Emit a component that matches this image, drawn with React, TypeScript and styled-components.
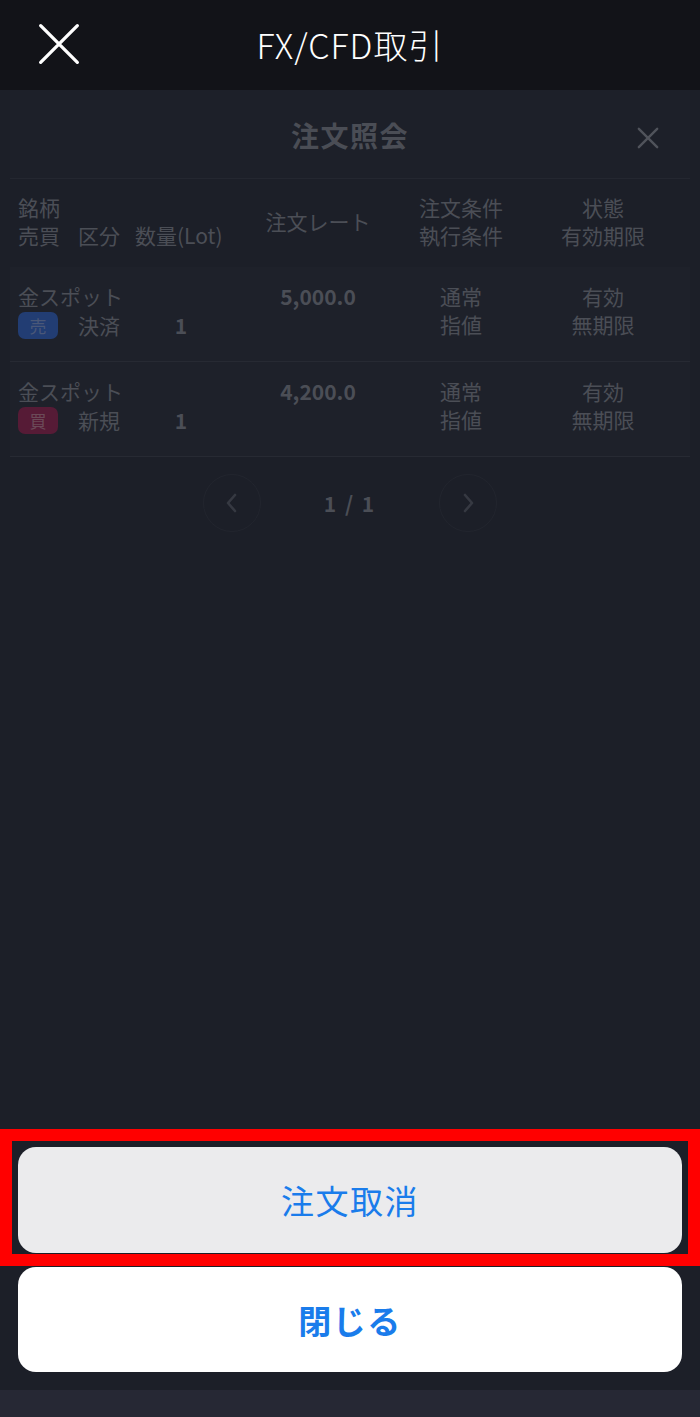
import styled, { createGlobalStyle } from "styled-components";

const GlobalStyle = createGlobalStyle`
    html, body {
        margin: 0;
        padding: 0;
        background: #1c1f28;
    }
    body {
        font-family: "Noto Sans CJK JP", "Noto Sans", "Liberation Sans", sans-serif;
    }
    * {
        box-sizing: border-box;
    }
`;

const Screen = styled.div`
    display: flex;
    flex-direction: column;
    width: 700px;
    height: 1417px;
    background: #1c1f28;
    overflow: hidden;
`;

const Header = styled.header`
    display: grid;
    grid-template-columns: 90px 1fr 90px;
    align-items: center;
    height: 90px;
    background: #121318;
    flex-shrink: 0;
`;

const IconButton = styled.button`
    display: flex;
    align-items: center;
    justify-content: center;
    padding: 0;
    border: 0;
    background: none;
    cursor: pointer;
`;

const HeaderClose = styled(IconButton)`
    width: 90px;
    height: 90px;
    margin-left: 14px;
    margin-top: -2px;
`;

const HeaderTitle = styled.h1`
    margin: 0;
    text-align: center;
    color: #ffffff;
    font-size: 34px;
    font-weight: 300;
    letter-spacing: 1px;
    margin-top: -2px;
`;

const Main = styled.main`
    flex: 1;
    display: flex;
    flex-direction: column;
    padding: 0 10px;
`;

const ModalHead = styled.div`
    position: relative;
    display: flex;
    align-items: center;
    justify-content: center;
    height: 89px;
    border-bottom: 1px solid #242730;
    background: #1d2029;
`;

const ModalTitle = styled.h2`
    margin: 0;
    color: #4a4d55;
    font-size: 28px;
    font-weight: 700;
    letter-spacing: 1.5px;
    margin-top: 2px;
`;

const ModalClose = styled(IconButton)`
    position: absolute;
    right: 25px;
    top: 31px;
    width: 34px;
    height: 34px;
`;

const TableRow = styled.div<{ $head?: boolean }>`
    display: grid;
    grid-template-columns: 222px 156px 130px 154px;
    padding: ${(p) => (p.$head ? "14px 8px 18px" : "15px 8px 22px")};
    background: ${(p) => (p.$head ? "transparent" : "#1e212a")};
    border-bottom: ${(p) => (p.$head ? "0" : "1px solid #272a33")};
    color: #4b4e56;
    font-size: 21px;
    line-height: 28px;
`;

const Cell = styled.div<{ $center?: boolean; $middle?: boolean; $bold?: boolean }>`
    display: flex;
    flex-direction: column;
    align-items: ${(p) => (p.$center ? "center" : "flex-start")};
    justify-content: ${(p) => (p.$middle ? "center" : "flex-start")};
    font-weight: ${(p) => (p.$bold ? 700 : 400)};
`;

const SubLine = styled.div`
    display: grid;
    grid-template-columns: 60px 57px 92px;
    align-items: center;
    white-space: nowrap;
`;

const Qty = styled.span<{ $head?: boolean }>`
    text-align: ${(p) => (p.$head ? "left" : "center")};
    font-weight: ${(p) => (p.$head ? 400 : 700)};
`;

const Badge = styled.span<{ $side: "sell" | "buy" }>`
    display: inline-flex;
    align-items: center;
    justify-content: center;
    width: 40px;
    height: 27px;
    margin-top: 2px;
    border-radius: 7px;
    font-size: 17px;
    color: ${(p) => (p.$side === "sell" ? "#4a5878" : "#6b4a58")};
    background: ${(p) => (p.$side === "sell" ? "#223d73" : "#561b36")};
`;

const Pager = styled.div`
    display: flex;
    align-items: center;
    justify-content: center;
    gap: 52px;
    margin-top: 17px;
`;

const PageButton = styled(IconButton)`
    width: 58px;
    height: 58px;
    border-radius: 50%;
    border: 1px solid #22252e;
`;

const PageCount = styled.span`
    width: 74px;
    text-align: center;
    color: #4b4e56;
    font-size: 21px;
    font-weight: 700;
    letter-spacing: 2px;
`;

const Actions = styled.div`
    display: flex;
    flex-direction: column;
    gap: 1px;
    padding-bottom: 18px;
    flex-shrink: 0;
`;

const Highlight = styled.div`
    border: 12px solid #ff0000;
    padding: 6px 6px 1px;
`;

const SheetButton = styled.button<{ $primary?: boolean }>`
    display: flex;
    align-items: center;
    justify-content: center;
    width: ${(p) => (p.$primary ? "664px" : "100%")};
    height: ${(p) => (p.$primary ? "105px" : "106px")};
    margin: ${(p) => (p.$primary ? "0 18px" : "0")};
    border: 0;
    border-radius: 18px;
    background: ${(p) => (p.$primary ? "#ffffff" : "#ebebed")};
    color: #1a7ceb;
    font-family: inherit;
    font-size: 33px;
    font-weight: ${(p) => (p.$primary ? 700 : 400)};
    letter-spacing: 1.5px;
    cursor: pointer;
`;

const BottomBar = styled.div`
    height: 27px;
    background: #262834;
    flex-shrink: 0;
`;

type Order = {
    name: string;
    side: "sell" | "buy";
    kind: string;
    qty: number;
    rate: string;
    cond: string;
    exec: string;
    state: string;
    expiry: string;
};

const orders: Order[] = [
    { name: "金スポット", side: "sell", kind: "決済", qty: 1, rate: "5,000.0", cond: "通常", exec: "指値", state: "有効", expiry: "無期限" },
    { name: "金スポット", side: "buy", kind: "新規", qty: 1, rate: "4,200.0", cond: "通常", exec: "指値", state: "有効", expiry: "無期限" },
];

const Cross = ({ size, color, width }: { size: number; color: string; width: number }) => (
    <svg width={size} height={size} viewBox="0 0 24 24" fill="none">
        <path d="M2 2L22 22M22 2L2 22" stroke={color} strokeWidth={width} strokeLinecap="round" />
    </svg>
);

const Chevron = ({ dir }: { dir: "left" | "right" }) => (
    <svg width="16" height="24" viewBox="0 0 16 24" fill="none">
        <path
            d={dir === "left" ? "M11 4L4 12L11 20" : "M5 4L12 12L5 20"}
            stroke="#363942"
            strokeWidth="2.6"
            strokeLinecap="round"
            strokeLinejoin="round"
        />
    </svg>
);

export default function App() {
    return (
        <Screen>
            <GlobalStyle />
            <Header>
                <HeaderClose aria-label="close">
                    <Cross size={44} color="#ffffff" width={1.8} />
                </HeaderClose>
                <HeaderTitle>FX/CFD取引</HeaderTitle>
                <span />
            </Header>

            <Main>
                <ModalHead>
                    <ModalTitle>注文照会</ModalTitle>
                    <ModalClose aria-label="close">
                        <Cross size={22} color="#50535b" width={2.6} />
                    </ModalClose>
                </ModalHead>

                <TableRow $head>
                    <Cell>
                        <span>銘柄</span>
                        <SubLine>
                            <span>売買</span>
                            <span>区分</span>
                            <Qty $head>数量(Lot)</Qty>
                        </SubLine>
                    </Cell>
                    <Cell $center $middle>注文レート</Cell>
                    <Cell $center>
                        <span>注文条件</span>
                        <span>執行条件</span>
                    </Cell>
                    <Cell $center>
                        <span>状態</span>
                        <span>有効期限</span>
                    </Cell>
                </TableRow>

                {orders.map((o, i) => (
                    <TableRow key={i}>
                        <Cell>
                            <span>{o.name}</span>
                            <SubLine>
                                <Badge $side={o.side}>{o.side === "sell" ? "売" : "買"}</Badge>
                                <span>{o.kind}</span>
                                <Qty>{o.qty}</Qty>
                            </SubLine>
                        </Cell>
                        <Cell $center $bold>{o.rate}</Cell>
                        <Cell $center>
                            <span>{o.cond}</span>
                            <span>{o.exec}</span>
                        </Cell>
                        <Cell $center>
                            <span>{o.state}</span>
                            <span>{o.expiry}</span>
                        </Cell>
                    </TableRow>
                ))}

                <Pager>
                    <PageButton aria-label="prev">
                        <Chevron dir="left" />
                    </PageButton>
                    <PageCount>1 / 1</PageCount>
                    <PageButton aria-label="next">
                        <Chevron dir="right" />
                    </PageButton>
                </Pager>
            </Main>

            <Actions>
                <Highlight>
                    <SheetButton>注文取消</SheetButton>
                </Highlight>
                <SheetButton $primary>閉じる</SheetButton>
            </Actions>
            <BottomBar />
        </Screen>
    );
}
